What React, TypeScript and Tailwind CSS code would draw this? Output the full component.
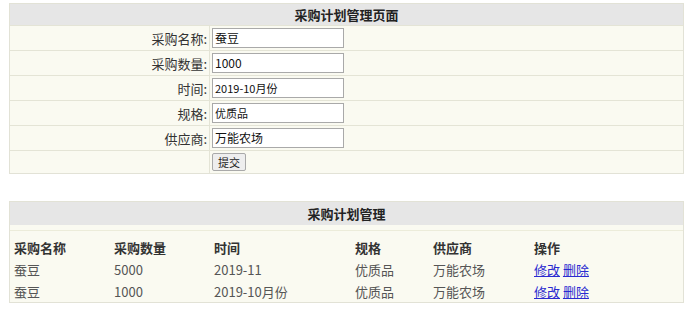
import React from "react";

const font = { fontFamily: '"Noto Sans CJK SC", "Noto Sans", sans-serif' };

const rows: { label: string; value: string; small?: boolean }[] = [
  { label: "采购名称:", value: "蚕豆" },
  { label: "采购数量:", value: "1000" },
  { label: "时间:", value: "2019-10月份", small: true },
  { label: "规格:", value: "优质品", small: true },
  { label: "供应商:", value: "万能农场" },
];

const data = [
  ["蚕豆", "5000", "2019-11", "优质品", "万能农场"],
  ["蚕豆", "1000", "2019-10月份", "优质品", "万能农场"],
];

const cols = ["w-[100px]", "w-[100px]", "w-[141px]", "w-[78px]", "w-[101px]", "flex-1"];

export default function App() {
  return (
    <div className="w-[693px] h-[314px] bg-white text-[#333] overflow-hidden" style={font}>
      <div className="ml-[9px] mt-[3px] w-[675px] border border-[#e2e2d6] bg-[#fafaf1]">
        <div className="h-[21px] bg-[#e6e6e6] flex items-center justify-center text-[13px] font-bold text-[#222] leading-none">
          采购计划管理页面
        </div>
        {rows.map((r) => (
          <div key={r.label} className="h-[25px] flex border-t border-[#e4e4d6]">
            <div className="w-[200px] border-r border-[#e4e4d6] flex items-center justify-end pr-[2px] text-[13px] text-[#333] leading-none">
              {r.label}
            </div>
            <div className="flex items-center pl-[2px]">
              <div
                className={`w-[132px] h-[20px] bg-white border border-[#a9a9a9] flex items-center pl-[2px] leading-none text-[#111] ${r.small ? "text-[11px]" : "text-[12px]"}`}
              >
                {r.value}
              </div>
            </div>
          </div>
        ))}
        <div className="h-[23px] flex border-t border-[#e4e4d6]">
          <div className="w-[200px] border-r border-[#e4e4d6]" />
          <div className="flex items-center pl-[2px]">
            <button className="h-[18px] px-[5px] bg-[#eeeeee] border border-[#a9a9a9] rounded-[2px] text-[11px] text-[#222] leading-none">
              提交
            </button>
          </div>
        </div>
      </div>

      <div className="ml-[9px] mt-[27px] w-[675px] border border-[#e2e2d6] bg-[#fafaf1]">
        <div className="h-[23px] bg-[#e6e6e6] flex items-center justify-center text-[13px] font-bold text-[#222] leading-none">
          采购计划管理
        </div>
        <div className="h-[6px] border-b border-[#ececda]" />
        <div className="pl-[4px] pt-[6px]">
          <div className="flex h-[21px] items-center font-bold text-[13px] text-[#333] leading-none">
            {["采购名称", "采购数量", "时间", "规格", "供应商", "操作"].map((h, i) => (
              <div key={h} className={cols[i]}>{h}</div>
            ))}
          </div>
          {data.map((d, ri) => (
            <div key={ri} className="flex h-[22px] items-center text-[13px] text-[#555] leading-none">
              {d.map((c, i) => (
                <div key={i} className={cols[i]}>{c}</div>
              ))}
              <div className={cols[5]}>
                <span className="text-[#2a2ad0] underline">修改</span>{" "}
                <span className="text-[#2a2ad0] underline">删除</span>
              </div>
            </div>
          ))}
        </div>
      </div>
    </div>
  );
}
